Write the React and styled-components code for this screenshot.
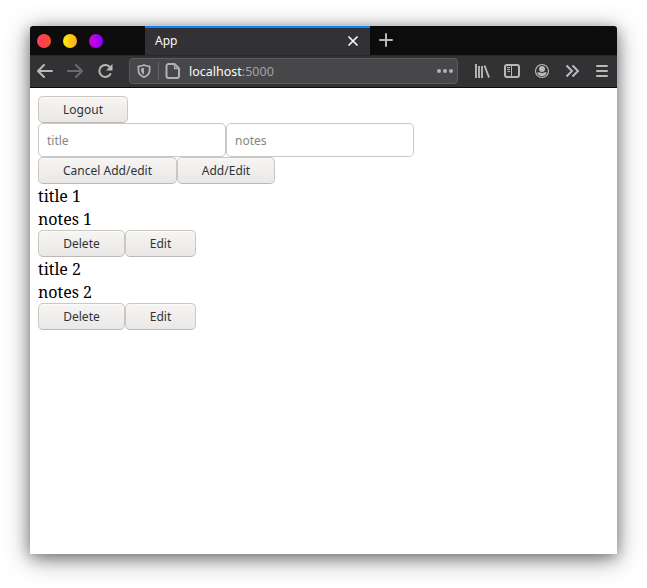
import React from "react";
import styled, { createGlobalStyle, css } from "styled-components";

const GlobalStyle = createGlobalStyle`
  * { box-sizing: border-box; }
  html, body { margin: 0; background: #fff; }
  body { overflow: hidden; }
`;

const Desktop = styled.div`
  height: 588px;
  padding: 26px 30px 34px;
  overflow: hidden;
`;

const BrowserWindow = styled.div`
  width: 587px;
  height: 528px;
  display: flex;
  flex-direction: column;
  overflow: hidden;
  border-radius: 3px 3px 0 0;
  background: #fff;
  box-shadow: 0 5px 26px rgba(0, 0, 12, 0.42), 0 3px 14px rgba(0, 0, 12, 0.32);
  font-family: "Noto Sans", sans-serif;
`;

const TitleBar = styled.header`
  height: 29px;
  display: flex;
  background: #0c0c0c;
`;

const WindowControls = styled.div`
  width: 115px;
  display: flex;
  align-items: center;
  gap: 12px;
  padding: 1px 0 0 7px;
`;

const ControlDot = styled.span`
  width: 14px;
  height: 14px;
  border-radius: 50%;
  background: linear-gradient(90deg, ${(p) => p.$from}, ${(p) => p.$to});
`;

const Tab = styled.div`
  width: 225px;
  display: flex;
  align-items: center;
  justify-content: space-between;
  padding: 0 11px 1px 10px;
  border-top: 2px solid #0a84ff;
  background: #323234;
  color: #f9f9fa;
  font-size: 12px;
  line-height: 17px;
`;

const TabTitle = styled.span`
  padding-bottom: 1px;
`;

const NewTab = styled.div`
  display: flex;
  padding: 7px 0 0 9px;
`;

const Toolbar = styled.nav`
  height: 33px;
  display: flex;
  align-items: center;
  padding: 0 0 1px 7px;
  background: #323234;
  border-top: 1px solid #29292b;
  border-bottom: 1px solid #0c0c0d;
`;

const Navigation = styled.div`
  display: flex;
  gap: 14px;
  width: 92px;
`;

const AddressBar = styled.div`
  width: 329px;
  height: 26px;
  display: flex;
  align-items: center;
  padding: 0 4px 0 7px;
  border: 1px solid #5c5c5f;
  border-radius: 4px;
  background: #474749;
`;

const Divider = styled.span`
  width: 1px;
  height: 18px;
  margin: 0 6px 0 7px;
  background: #63666e;
`;

const Address = styled.span`
  flex: 1;
  margin-left: 8px;
  padding-top: 2px;
  color: #a3a3a5;
  font-size: 12.5px;
  line-height: 18px;
  b { color: #f9f9fa; font-weight: 400; }
`;

const Tools = styled.div`
  display: flex;
  gap: 14px;
  margin-left: 16px;
`;

const Glyph = styled.svg`
  display: block;
  flex: none;
  width: ${(p) => p.$size || 16}px;
  height: ${(p) => p.$size || 16}px;
  fill: none;
  stroke: ${(p) => p.$color || "#b9b9ba"};
  stroke-width: ${(p) => p.$weight || 2};
  stroke-linecap: round;
  stroke-linejoin: round;
`;

const Page = styled.main`
  flex: 1;
  padding: 8px;
  color: #000;
  font-family: "Noto Serif", "Droid Serif", "DejaVu Serif Condensed", "DejaVu Serif", serif;
  font-size: 16px;
  line-height: 23px;
`;

const Row = styled.div`
  display: flex;
`;

const control = css`
  border: 1px solid #cdc7c2;
  border-radius: 5px;
  font-family: "Noto Sans", sans-serif;
  font-size: 12px;
  margin: 0;
`;

const Button = styled.button`
  ${control}
  width: ${(p) => p.$width}px;
  height: 27px;
  padding: 0;
  border-bottom-color: #bfb8b1;
  background: linear-gradient(#f6f5f4, #eae8e7);
  box-shadow: inset 0 1px #fbfafa;
  color: #2e3436;
  line-height: 17px;
`;

const Field = styled.input`
  ${control}
  width: 188px;
  height: 34px;
  padding: 1px 8px 0;
  background: #fff;
  &::placeholder { color: #858585; opacity: 1; }
`;

const Line = styled.div`
  height: 23px;
  padding-top: 1px;
  white-space: nowrap;
`;

const notes = [
  { id: 1, title: "title 1", body: "notes 1" },
  { id: 2, title: "title 2", body: "notes 2" },
];

export default function App() {
  return (
    <Desktop>
      <GlobalStyle />
      <BrowserWindow>
        <TitleBar>
          <WindowControls>
            <ControlDot $from="#ff3c63" $to="#ff4b2b" />
            <ControlDot $from="#fff000" $to="#ffa62b" />
            <ControlDot $from="#d300d9" $to="#8a00ff" />
          </WindowControls>
          <Tab>
            <TabTitle>App</TabTitle>
            <Glyph $size={12} $color="#f9f9fa" $weight={1.7} viewBox="0 0 12 12">
              <path d="M2 2l8 8M10 2l-8 8" />
            </Glyph>
          </Tab>
          <NewTab>
            <Glyph $size={14} viewBox="0 0 14 14">
              <path d="M7 1v12M1 7h12" />
            </Glyph>
          </NewTab>
        </TitleBar>
        <Toolbar>
          <Navigation>
            <Glyph viewBox="0 0 16 16"><path d="M15 8H1.500M7 2L1 8l6 6" /></Glyph>
            <Glyph $color="#6b6b6d" viewBox="0 0 16 16"><path d="M1 8h13.500M9 2l6 6-6 6" /></Glyph>
            <Glyph viewBox="0 0 16 16">
              <path d="M13 4.200A6 6 0 1 0 13.500 11" />
              <path d="M15.500 1v6.500H9z" fill="#b9b9ba" stroke="none" />
            </Glyph>
          </Navigation>
          <AddressBar>
            <Glyph $size={14} $color="#b1b1b3" viewBox="0 0 14 14">
              <path d="M7 1C9 2 10.800 2.300 12.600 2.400V6c0 3.500-2 5.800-5.600 7.200C3.400 11.800 1.400 9.500 1.400 6V2.400C3.200 2.300 5 2 7 1z" strokeWidth="1.800" />
              <path d="M7 3.700L4 4.500V6c0 2.200 1 3.500 3 4.700z" fill="#b1b1b3" stroke="none" />
            </Glyph>
            <Divider />
            <Glyph $color="#b1b1b3" viewBox="0 0 16 16">
              <path d="M3.500 1H9.500L14 5.500V13a2 2 0 0 1-2 2H3.500a2 2 0 0 1-2-2V3a2 2 0 0 1 2-2z" />
              <path d="M9.500 1.500V5.500H13.500" strokeWidth="1.300" />
            </Glyph>
            <Address><b>localhost</b>:5000</Address>
            <Glyph $color="#b1b1b3" viewBox="0 0 16 16">
              <g fill="#b1b1b3" stroke="none">
                <circle cx="2" cy="8" r="2" /><circle cx="8" cy="8" r="2" /><circle cx="14" cy="8" r="2" />
              </g>
            </Glyph>
          </AddressBar>
          <Tools>
            <Glyph viewBox="0 0 16 16">
              <path d="M2 1v14M5 3v12M8 3v12M10.500 2.500L15 14.500" strokeWidth="1.900" strokeLinecap="butt" />
            </Glyph>
            <Glyph viewBox="0 0 16 16">
              <rect x="1" y="2" width="14" height="12" rx="2" />
              <path d="M7.500 2v12" strokeWidth="1" />
              <path d="M3 4.500h3M3 6.500h3M3.500 8.500h2.500" strokeWidth="1" strokeLinecap="butt" />
            </Glyph>
            <Glyph viewBox="0 0 16 16">
              <circle cx="8" cy="8" r="6.500" strokeWidth="1.200" />
              <circle cx="8" cy="6" r="3" fill="#b9b9ba" stroke="none" />
              <path d="M3.300 9.500C5 9 5.500 10 8 10s3-1 4.700-.5C12 12 10.500 13.200 8 13.200S4 12 3.300 9.500z" fill="#b9b9ba" stroke="none" />
            </Glyph>
            <Glyph viewBox="0 0 16 16"><path d="M2.500 2.500L8 8l-5.500 5.500M8.500 2.500L14 8l-5.500 5.500" strokeLinejoin="miter" strokeLinecap="butt" /></Glyph>
            <Glyph viewBox="0 0 16 16"><path d="M3 3h10M3 8h10M3 13h10" /></Glyph>
          </Tools>
        </Toolbar>
        <Page>
          <Row><Button $width={90}>Logout</Button></Row>
          <Row>
            <Field placeholder="title" />
            <Field placeholder="notes" />
          </Row>
          <Row>
            <Button $width={139}>Cancel Add/edit</Button>
            <Button $width={98}>Add/Edit</Button>
          </Row>
          {notes.map((note) => (
            <section key={note.id}>
              <Line>{note.title}</Line>
              <Line>{note.body}</Line>
              <Row>
                <Button $width={87}>Delete</Button>
                <Button $width={71}>Edit</Button>
              </Row>
            </section>
          ))}
        </Page>
      </BrowserWindow>
    </Desktop>
  );
}
